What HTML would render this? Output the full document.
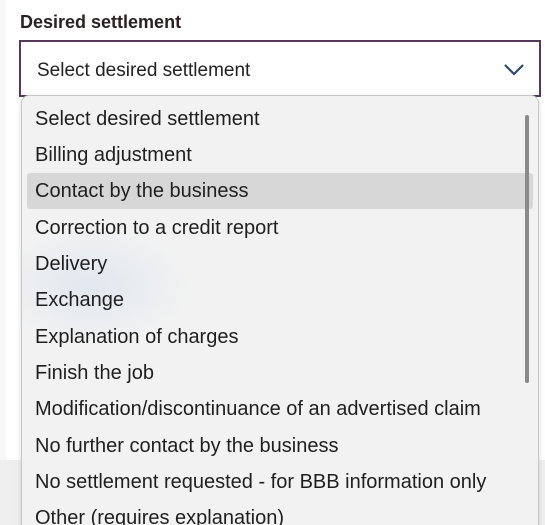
<!DOCTYPE html>
<html style="width:545px;height:525px;overflow:hidden"><head><style>
body{margin:0;width:545px;height:525px;overflow:hidden;background:#fff;font-family:"Liberation Sans",Arial,sans-serif;position:relative}
.bg{position:absolute;left:0;top:0;width:6px;height:460px;background:#f7f7f7}
.bot{position:absolute;left:0;top:460px;width:545px;height:65px;background:#efefef}
.lbl{position:absolute;left:20px;top:12px;font-size:18px;font-weight:bold;color:#2a2220}
.sel{position:absolute;left:19px;top:40px;width:518px;height:53px;border:2px solid #55385a;box-sizing:content-box;background:#fff}
.sel span{position:absolute;left:16px;top:18px;font-size:19px;color:#222}
.sel svg{position:absolute;right:14px;top:21px}
.dd{position:absolute;left:21px;top:95px;width:516px;height:440px;background:#f2f2f2;border:1px solid #c8c8c8;border-radius:8px;overflow:hidden;box-shadow:0 2px 6px rgba(0,0,0,.15)}
.it{position:absolute;left:13px;font-size:20px;color:#1f1f1f;white-space:nowrap;line-height:24px}
.hl{position:absolute;left:5px;top:77px;width:506px;height:36px;background:#d7d7d7;border-radius:3px}
.sb{position:absolute;left:503px;top:19px;width:4px;height:268px;background:#8a8a8a;border-radius:2px}
.glow{position:absolute;left:-30px;top:130px;width:200px;height:120px;background:radial-gradient(ellipse at center,rgba(205,218,235,.45),rgba(242,242,242,0) 70%)}
</style></head><body>
<div class="bg"></div><div class="bot"></div>
<div class="lbl">Desired settlement</div>
<div class="sel"><span>Select desired settlement</span>
<svg width="22" height="14" viewBox="0 0 22 14"><path d="M2 2 L11 11 L20 2" fill="none" stroke="#2d4a6b" stroke-width="2.2"/></svg></div>
<div class="dd">
<div class="glow"></div>
<div class="hl"></div>
<div class="sb"></div>
<div class="it" style="top:11px">Select desired settlement</div>
<div class="it" style="top:47px">Billing adjustment</div>
<div class="it" style="top:83px">Contact by the business</div>
<div class="it" style="top:120px">Correction to a credit report</div>
<div class="it" style="top:156px">Delivery</div>
<div class="it" style="top:192px">Exchange</div>
<div class="it" style="top:229px">Explanation of charges</div>
<div class="it" style="top:265px">Finish the job</div>
<div class="it" style="top:301px">Modification/discontinuance of an advertised claim</div>
<div class="it" style="top:338px">No further contact by the business</div>
<div class="it" style="top:374px">No settlement requested - for BBB information only</div>
<div class="it" style="top:410px">Other (requires explanation)</div>
</div>
</body></html>
